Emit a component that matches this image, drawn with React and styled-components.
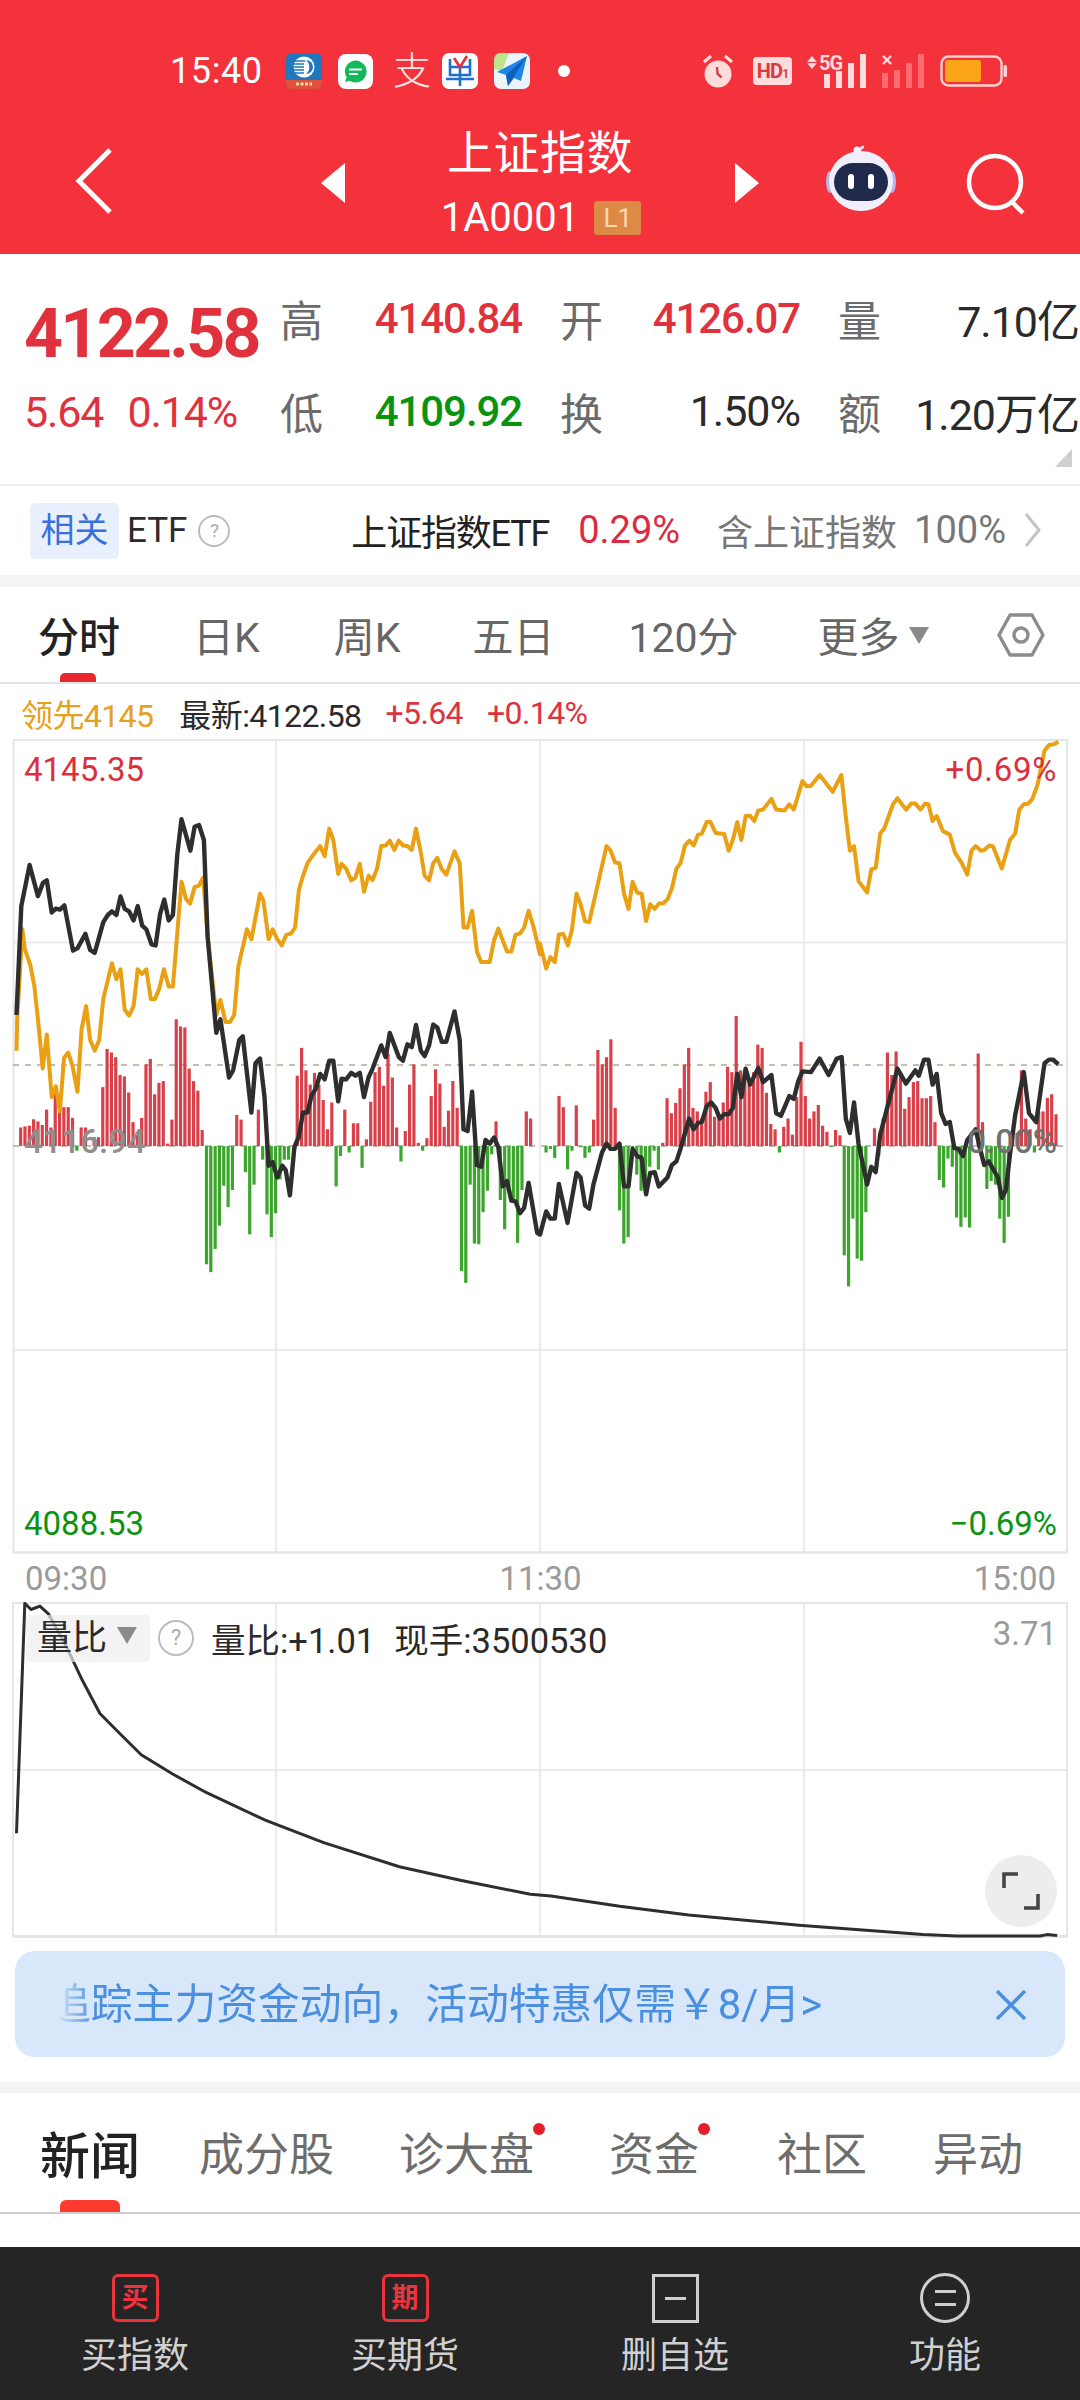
import React from "react";
import styled, { createGlobalStyle } from "styled-components";

const FONT = `Roboto, "Noto Sans CJK SC", "Noto Sans", sans-serif`;
const RED = "#E0323C";
const GREEN = "#0A930F";

const Global = createGlobalStyle`
  html, body { margin: 0; padding: 0; background: #fff; }
  body { font-family: ${FONT}; }
  * { box-sizing: border-box; }
`;

const Page = styled.div`
  width: 1080px; height: 2400px; overflow: hidden; background: #fff;
  display: flex; flex-direction: column; font-family: ${FONT};
`;

/* ---------- header ---------- */
const Header = styled.header`
  height: 254px; background: #F3323B; color: #fff; padding-top: 51px;
  display: flex; flex-direction: column;
`;
const StatusBar = styled.div`
  height: 40px; display: flex; align-items: center; padding-left: 170px;
`;
const Clock = styled.span`font-size: 36px; line-height: 40px; width: 116px; letter-spacing: .6px;`;
const StatusLeft = styled.div`display: flex; align-items: center; gap: 16px;`;
const AlipayGlyph = styled.span`
  font-size: 38px; line-height: 36px; width: 35px; text-align: center; color: #ffe9e9; font-weight: 300; margin: 0 -2px 0 4px;
`;
const Dot = styled.i`width: 12px; height: 12px; border-radius: 50%; background: #fff; margin-left: 12px;`;
const StatusRight = styled.div`display: flex; align-items: center; gap: 14px; margin-left: 132px;`;
const NavRow = styled.div`
  position: relative; flex: 1; display: flex; align-items: flex-start; justify-content: center; padding-top: 31px;
`;
const NavSide = styled.button`
  position: absolute; background: none; border: 0; padding: 0; display: block;
  left: ${p => p.$x}px; top: ${p => p.$y}px;
`;
const TitleBlock = styled.div`display: flex; align-items: center; gap: 0; `;
const TitleText = styled.div`
  width: 414px; text-align: center; display: flex; flex-direction: column; align-items: center;
`;
const Title = styled.div`font-size: 46px; line-height: 62px; letter-spacing: .5px;`;
const Sub = styled.div`display: flex; align-items: center; gap: 15px; margin-top: 12px; padding-left: 2px;`;
const Code = styled.span`font-size: 40px; line-height: 44px;`;
const LevelBadge = styled.span`
  width: 47px; height: 34px; background: #DE8A47; color: #FBD9B2; font-size: 26px; line-height: 34px;
  text-align: center; border-radius: 3px;
`;

/* ---------- quote ---------- */
const Quote = styled.section`
  position: relative; height: 232px; display: flex; border-bottom: 2px solid #ECECEC; padding-top: 34px;
`;
const QuoteLeft = styled.div`width: 280px; padding-left: 24px;`;
const Price = styled.div`
  color: ${RED}; font-size: 68px; line-height: 70px; font-weight: 700; letter-spacing: -2.7px; margin-top: 11px; white-space: nowrap;
`;
const Change = styled.div`
  display: flex; gap: 24px; color: ${RED}; font-size: 43px; line-height: 50px; margin-top: 18px; letter-spacing: -1.1px;
`;
const StatGrid = styled.div`
  display: grid; grid-template-columns: 242px 240px 241px; column-gap: 38px; row-gap: 33px; grid-auto-rows: 60px;
`;
const Stat = styled.div`display: flex; justify-content: space-between; align-items: center;`;
const StatLabel = styled.span`font-size: 43px; color: #6b6b6b;`;
const StatValue = styled.span`
  font-size: ${p => (p.$c ? 42 : 43)}px; letter-spacing: ${p => (p.$c ? -1.1 : -1)}px; white-space: nowrap;
  font-weight: ${p => (p.$c ? 500 : 400)}; color: ${p => p.$c || "#2a2a2a"};
`;
const Corner = styled.i`
  position: absolute; right: 8px; bottom: 17px; width: 0; height: 0;
  border-left: 17px solid transparent; border-bottom: 18px solid #CFCFCF;
`;

/* ---------- ETF row ---------- */
const EtfRow = styled.div`
  height: 89px; display: flex; align-items: center; padding-left: 30px; padding-right: 37px; font-size: 35px; color: #2c2c2c;
`;
const Chip = styled.span`
  width: 89px; height: 56px; background: #E8F0FD; color: #3B6FE0; border-radius: 5px;
  text-align: center; line-height: 55px; font-size: 34px;
`;
const EtfWord = styled.span`margin-left: 8px; font-size: 35px;`;
const Help = styled.i`
  display: inline-block; border: 2px solid #bcbcbc; border-radius: 50%; color: #aaa; font-style: normal; text-align: center;
  width: ${p => p.$s}px; height: ${p => p.$s}px; line-height: ${p => p.$s - 4}px; font-size: ${p => p.$s * 0.6}px;
  margin-left: ${p => p.$ml}px;
`;
const EtfRight = styled.div`margin-left: auto; display: flex; align-items: center; margin-top: -2px;`;
const EtfName = styled.span`font-size: 36px; letter-spacing: -1.2px; color: #222;`;
const EtfPct = styled.span`font-size: 38px; color: #D92B42; margin-left: 29px;`;
const EtfDesc = styled.span`font-size: 36px; color: #777; margin-left: 37px;`;
const EtfHold = styled.span`font-size: 38px; color: #777; margin-left: 17px; margin-right: 17px;`;

const Gap = styled.div`height: ${p => p.$h}px; background: #F4F4F4;`;

/* ---------- period tabs ---------- */
const Tabs = styled.nav`
  position: relative; height: 97px; border-bottom: 2px solid #E4E4E4; display: flex; align-items: center; padding: 7px 35px 0 38px;
`;
const TabList = styled.div`display: flex; align-items: center;`;
const Tab = styled.span`
  font-size: 41px; line-height: 50px; color: ${p => (p.$on ? "#222" : "#666")}; display: flex; align-items: center; gap: 9px;
  font-weight: ${p => (p.$on ? 500 : 400)}; margin-left: ${p => p.$ml || 0}px; white-space: nowrap;
`;
const Caret = styled.i`
  width: 0; height: 0; border-left: 10px solid transparent; border-right: 10px solid transparent;
  border-top: 17px solid #8a8a8a; margin-top: -6px;
`;
const HexBox = styled.div`margin-left: auto; display: flex; margin-top: -7px;`;
const Indicator = styled.i`
  position: absolute; left: 60px; bottom: 0; width: 36px; height: 9px; background: #E8262E; border-radius: 5px 5px 0 0;
`;

/* ---------- info ---------- */
const Info = styled.div`
  height: 55px; display: flex; align-items: center; padding: 2px 0 0 21px; font-size: 32px; letter-spacing: -.6px;
`;
const InfoItem = styled.span`color: ${p => p.$c}; margin-left: ${p => p.$ml || 0}px; white-space: nowrap;`;

/* ---------- charts ---------- */
const ChartWrap = styled.div`position: relative; height: ${p => p.$h}px; flex: none;`;
const ChartSvg = styled.svg`display: block; width: 1080px;`;
const AxisLabel = styled.span`
  position: absolute; font-size: 33px; line-height: 40px; top: ${p => p.$top}px;
  ${p => (p.$right ? `right: ${p.$right}px;` : `left: 24px;`)}
  color: ${p => p.$c}; letter-spacing: ${p => p.$ls || 0}px; font-weight: ${p => p.$w || 400};
`;
const TimeRow = styled.div`
  height: 48px; display: flex; justify-content: space-between; align-items: center; padding: 0 24px 0 25px;
  font-size: 33px; color: #9a9a9a; flex: none;
`;
const VolOverlay = styled.div`
  position: absolute; left: 26px; top: 11px; display: flex; align-items: center; color: #2a2a2a; font-size: 34.5px;
`;
const VolChip = styled.span`
  width: 124px; height: 47px; background: rgba(238,238,238,.7); border-radius: 4px; display: flex; align-items: center;
  padding-left: 11px; gap: 10px; line-height: 47px; font-size: 35px;
`;
const VolText = styled.span`margin-left: ${p => p.$ml}px; white-space: nowrap;`;
const VolMax = styled.span`
  position: absolute; right: 23px; top: 12px; color: #9a9a9a; font-size: 33px; line-height: 40px;
`;
const ExpandBtn = styled.div`
  position: absolute; left: 985px; top: 253px; width: 72px; height: 72px; border-radius: 50%; background: #EDEDED;
  display: flex; align-items: center; justify-content: center;
`;

/* ---------- banner ---------- */
const Banner = styled.div`
  height: 106px; margin: 13px 15px 25px; background: #D8E7FA; border-radius: 20px; flex: none;
  display: flex; align-items: center; padding: 2px 38px 0 45px;
`;
const Marquee = styled.div`
  width: 800px; overflow: hidden; white-space: nowrap;
  -webkit-mask-image: linear-gradient(90deg, rgba(0,0,0,.08) 0, #000 34px);
  mask-image: linear-gradient(90deg, rgba(0,0,0,.08) 0, #000 34px);
`;
const MarqueeText = styled.span`
  display: inline-block; margin-left: -11px; font-size: 41.8px; color: #4A8FE0; line-height: 60px;
`;
const BannerClose = styled.div`margin-left: auto; display: flex;`;

/* ---------- bottom tabs ---------- */
const NewsTabs = styled.nav`
  position: relative; height: 121px; border-bottom: 2px solid #CFCFCF; display: flex; align-items: center; flex: none; padding: 8px 0 10px 40px;
`;
const NewsTab = styled.span`
  position: relative; margin-left: ${p => p.$ml || 0}px; white-space: nowrap;
  font-size: ${p => (p.$on ? 50 : 45)}px; color: ${p => (p.$on ? "#222" : "#6d6d6d")}; font-weight: ${p => (p.$on ? 500 : 400)};
`;
const RedDot = styled.i`
  position: absolute; right: -11px; top: 4px; width: 12px; height: 12px; border-radius: 50%; background: #E3202A;
`;
const NewsIndicator = styled.i`
  position: absolute; left: 60px; bottom: 0; width: 60px; height: 12px; background: #FF3B30; border-radius: 6px 6px 0 0;
`;
const Spacer = styled.div`flex: 1;`;
const BottomBar = styled.footer`
  height: 153px; background: #252525; display: grid; grid-template-columns: repeat(4, 270px); flex: none;
`;
const BarItem = styled.div`
  display: flex; flex-direction: column; align-items: center; padding-top: 26px; color: #D0D0D0; font-size: 36px; line-height: 48px;
`;
const BarIcon = styled.div`height: 50px; display: flex; align-items: center; justify-content: center; margin-bottom: 9px;`;
const RedSquare = styled.span`
  width: 47px; height: 48px; border: 3px solid #E8333C; border-radius: 6px; color: #F0323C; font-size: 27px; font-weight: 700;
  line-height: 42px; text-align: center;
`;
const ClearSquare = styled.span`
  width: 47px; height: 49px; border: 3px solid #CFCFCF; display: flex; align-items: center; justify-content: center;
`;
const Dash = styled.i`width: 21px; height: 3px; background: #CFCFCF;`;
const Circle = styled.span`
  width: 50px; height: 50px; border: 3px solid #CFCFCF; border-radius: 50%; display: flex; flex-direction: column; gap: 10px;
  align-items: center; justify-content: center;
`;

/* ---------- chart data (traced) ---------- */
const gL = [[48,870],[50,780],[65,530],[72,585],[88,630],[100,690],[112,800],[124,920],[136,825],[150,1000],[162,970],[174,1040],[186,890],[198,875],[210,910],[225,985],[237,810],[250,745],[262,840],[275,870],[288,840],[300,725],[325,625],[338,670],[350,642],[362,755],[375,772],[388,745],[400,642],[412,655],[425,642],[438,725],[450,725],[463,695],[476,642],[490,690],[502,690],[515,540],[527,397],[540,445],[552,458],[565,412],[578,408],[590,385],[603,550],[628,770],[640,728],[655,790],[668,790],[680,770],[692,635],[705,580],[717,530],[730,558],[755,430],[765,450],[780,558],[792,530],[805,558],[818,575],[832,545],[845,542],[857,525],[868,420],[880,380],[893,345],[905,328],[930,297],[943,325],[956,248],[968,280],[982,375],[992,347],[1005,360],[1020,393],[1032,385],[1045,347],[1057,425],[1070,380],[1082,392],[1095,360],[1107,297],[1120,295],[1132,282],[1145,308],[1158,282],[1170,295],[1183,297],[1196,308],[1208,248],[1222,315],[1233,380],[1246,393],[1258,345],[1270,330],[1283,362],[1296,377],[1320,312],[1335,345],[1346,525],[1358,525],[1371,478],[1385,592],[1397,622],[1422,622],[1435,560],[1447,528],[1472,592],[1485,592],[1497,545],[1510,542],[1522,525],[1535,478],[1550,525],[1568,600]];
const gR = [[0,570],[18,640],[30,608],[43,622],[55,545],[68,543],[81,575],[93,530],[106,430],[118,460],[131,508],[143,510],[193,297],[205,310],[218,343],[231,345],[244,430],[257,473],[269,397],[282,427],[295,430],[308,507],[320,460],[333,473],[345,458],[358,457],[371,445],[383,415],[396,360],[408,345],[421,295],[434,282],[446,295],[459,265],[470,262],[484,230],[495,230],[510,260],[535,263],[548,310],[560,280],[573,230],[585,280],[597,213],[610,212],[622,227],[634,197],[648,195],[672,165],[686,195],[710,197],[724,180],[737,195],[762,115],[775,130],[787,128],[812,98],[850,145],[875,98],[888,215],[900,310],[912,297],[925,395],[950,427],[962,362],[975,358],[988,262],[1000,247],[1025,180],[1038,163],[1063,195],[1078,178],[1090,178],[1105,195],[1118,178],[1128,180],[1140,227],[1152,213],[1170,255],[1190,265],[1205,315],[1225,345],[1241,377],[1253,310],[1265,297],[1280,310],[1290,308],[1305,295],[1315,297],[1341,360],[1365,280],[1380,262],[1392,195],[1405,180],[1418,178],[1430,165],[1445,125],[1465,30],[1478,14],[1492,12],[1505,5]];
const kL = [[48,770],[62,465],[86,350],[110,437],[125,400],[136,393],[150,483],[162,472],[174,475],[187,463],[212,590],[225,583],[248,543],[262,588],[275,596],[300,510],[313,490],[325,480],[338,490],[350,438],[362,473],[375,480],[388,505],[400,465],[413,520],[425,530],[440,572],[452,575],[465,487],[477,447],[490,505],[502,490],[515,320],[527,222],[553,310],[565,243],[578,238],[592,280],[603,550],[628,820],[640,782],[665,945],[677,925],[695,840],[705,830],[730,1043],[742,905],[755,892],[768,1000],[780,1192],[792,1182],[805,1225],[820,1192],[830,1205],[842,1275],[855,1140],[868,1110],[880,1043],[893,1043],[905,995],[918,975],[930,935],[943,950],[956,898],[968,898],[982,1012],[992,948],[1005,950],[1020,932],[1032,940],[1045,932],[1057,1000],[1070,945],[1082,920],[1107,855],[1120,888],[1132,820],[1158,888],[1170,898],[1183,852],[1196,860],[1208,798],[1222,870],[1233,885],[1246,855],[1258,797],[1270,805],[1283,845],[1296,845],[1320,760],[1335,840],[1346,1090],[1358,1095],[1371,985],[1385,1190],[1397,1195],[1410,1120],[1422,1130],[1435,1113],[1447,1140],[1460,1250],[1472,1235],[1485,1290],[1497,1292],[1510,1325],[1522,1310],[1535,1240],[1560,1380],[1568,1385]];
const kR = [[0,1385],[18,1320],[30,1340],[43,1340],[55,1243],[80,1352],[106,1212],[118,1225],[131,1303],[143,1312],[155,1245],[180,1155],[193,1130],[205,1145],[218,1145],[231,1130],[244,1250],[257,1250],[269,1145],[282,1165],[295,1170],[308,1272],[320,1212],[333,1210],[345,1250],[370,1225],[383,1190],[396,1180],[408,1145],[433,1060],[446,1090],[459,1072],[470,1070],[484,1025],[497,1015],[510,1030],[522,1060],[535,1048],[548,1048],[560,1030],[573,935],[585,1000],[597,920],[610,965],[634,918],[648,958],[672,938],[686,1045],[700,1052],[724,997],[737,1005],[750,955],[762,928],[787,930],[812,892],[838,938],[862,892],[876,888],[888,1060],[900,1100],[912,1015],[925,1130],[950,1245],[962,1195],[975,1210],[988,1105],[1000,1060],[1038,920],[1063,962],[1090,925],[1100,940],[1115,895],[1128,895],[1140,965],[1152,935],[1165,1045],[1178,1075],[1190,1070],[1203,1143],[1215,1145],[1228,1165],[1241,1120],[1265,1090],[1278,1145],[1290,1190],[1303,1180],[1330,1225],[1341,1282],[1353,1260],[1365,1160],[1380,1050],[1405,930],[1420,1045],[1441,1070],[1465,905],[1478,895],[1490,895],[1505,908]];
const barsL = [1085,1082,1080,1062,1068,1078,1035,1085,990,1040,1028,1028,1058,1150,1085,1085,1137,1112,1112,972,865,875,888,938,942,987,1070,1098,1058,908,893,992,960,955,1130,1063,782,802,805,920,955,982,1092,1468,1490,1425,1360,1248,1308,1260,1050,1063,1210,1384,1245,1035,1175,1328,1392,1325,1230,1175,1175,1137,940,862,925,965,932,965,1008,1090,1015,1250,1165,1035,1155,1073,1073,1198,1118,1013,930,915,968,878,945,1085,1180,1095,965,908,1128,1150,1115,997,922,962,1083,1038,955,1030,1487,1520,1245,1410,1412,1322,1262,1160,1068,1288,1370,1250,1290,1408,1260,1040,1060];
const barsR = [1137,1155,1145,1170,997,1028,1202,1150,1023,1140,1170,1155,1063,868,908,888,838,1030,1317,1410,1392,1145,1217,1262,1270,1195,1150,1203,1128,1003,1045,1016,975,908,862,1030,1040,1060,985,958,1055,1060,1015,915,930,773,925,940,965,930,853,862,988,1075,1090,1155,1083,1060,1105,1000,845,997,1060,1040,1022,1080,1097,1140,1092,1107,1443,1530,1340,1452,1458,1322,1137,1087,1165,1060,875,938,872,935,1033,1000,958,955,1003,1003,997,1070,1232,1253,1172,1195,1337,1363,1337,1365,1137,878,1070,1257,1235,1245,1340,1408,1335,1100,1100,925,1060,1090,1155,1040,1040,1002,992,1048];
const ratio = [[24,968],[36,300],[45,318],[58,308],[70,330],[95,420],[120,525],[145,620],[175,680],[205,740],[250,795],[300,850],[385,930],[470,995],[580,1065],[670,1105],[770,1145],[800,1150],[900,1180],[1000,1205],[1160,1235],[1340,1262],[1390,1266],[1510,1266],[1520,1262],[1535,1265]];

const SX = 2.904, SY = 2.8;
const my = y => 740 + y / SY;
const pts = (l, r) => [...l.map(([x, y]) => [x / SX, my(y)]), ...r.map(([x, y]) => [540 + x / SX, my(y)])]
  .map(([x, y]) => `${x.toFixed(1)},${y.toFixed(1)}`).join(" ");
const base = my(1137);
const bars = [
  ...barsL.map((t, i) => [(60 + i * 12.55) / SX, t]),
  ...barsR.map((t, i) => [540 + (5 + i * 12.55) / SX, t]),
].filter(b => b[1] !== 1137);
const ratioPts = ratio.map(([x, y]) => `${(x / 1.452).toFixed(1)},${(1500 + y / 2.904).toFixed(1)}`).join(" ");

const GridV = ({ x, y1, y2, w = 1.5 }) => <line x1={x} x2={x} y1={y1} y2={y2} stroke="#E6E6E6" strokeWidth={w} />;
const GridH = ({ y, w = 1.5 }) => <line x1="13" x2="1068" y1={y} y2={y} stroke="#E6E6E6" strokeWidth={w} />;

const PriceChart = () => (
  <ChartSvg height="815" viewBox="0 739 1080 815">
    <GridV x="13.5" y1="740" y2="1553" w={2} />
    <GridV x="276" y1="740" y2="1553" />
    <GridV x="540" y1="740" y2="1553" />
    <GridV x="804" y1="740" y2="1553" />
    <GridV x="1067" y1="740" y2="1553" w={2} />
    <GridH y="740" w={2} />
    <GridH y="942.5" />
    <GridH y="1350" />
    <GridH y="1552.5" w={2.5} />
    <line x1="13" x2="1068" y1="1065" y2="1065" stroke="#B9A78C" strokeWidth="1.6" strokeDasharray="6 6" />
    <line x1="13" x2="1068" y1={base} y2={base} stroke="#A8A8A8" strokeWidth="1.6" strokeDasharray="6 6" />
    {bars.map(([x, t], i) => {
      const y = my(t);
      return t < 1137
        ? <rect key={i} x={x - 1.6} y={y} width="3.2" height={base - y} fill="#D8404A" />
        : <rect key={i} x={x - 1.6} y={base} width="3.2" height={y - base} fill="#3CA52C" />;
    })}
    <polyline points={pts(gL, gR)} fill="none" stroke="#E9A013" strokeWidth="4" strokeLinejoin="round" />
    <polyline points={pts(kL, kR)} fill="none" stroke="#2E2E2E" strokeWidth="4.4" strokeLinejoin="round" />
  </ChartSvg>
);

const RatioChart = () => (
  <ChartSvg height="336" viewBox="0 1602 1080 336">
    <GridV x="13" y1="1602" y2="1937" w={2} />
    <GridV x="276" y1="1602" y2="1937" />
    <GridV x="540" y1="1602" y2="1937" />
    <GridV x="804" y1="1602" y2="1937" />
    <GridV x="1067" y1="1602" y2="1937" w={2} />
    <GridH y="1603" w={2} />
    <GridH y="1770" />
    <GridH y="1936.5" w={3} />
    <polyline points={ratioPts} fill="none" stroke="#2E2E2E" strokeWidth="3" strokeLinejoin="round" />
  </ChartSvg>
);

/* ---------- icons ---------- */
const AppBlue = () => (
  <svg width="36" height="36" viewBox="0 0 36 36">
    <rect width="36" height="36" rx="6" fill="#1F78BE" />
    <circle cx="18" cy="14" r="10.5" fill="#fff" />
    <path d="M20 7a7 7 0 0 1 0 14 9 9 0 0 0 0-14z" fill="#1F78BE" />
    <path d="M8 8h11M7 11h11M7 14h11M7 17h11M9 20h9" stroke="#1F78BE" strokeWidth="1.3" />
    <path d="M0 27h36v3a6 6 0 0 1-6 6H6a6 6 0 0 1-6-6z" fill="#E2503A" />
    <path d="M10 31h16" stroke="#F8D9A8" strokeWidth="3" strokeDasharray="3 1.5" />
  </svg>
);
const AppChat = () => (
  <svg width="35" height="35" viewBox="0 0 35 35">
    <rect width="35" height="35" rx="8" fill="#fff" />
    <path d="M17.5 6.5a11 11 0 1 1-5.8 20.3L7 28l1.6-4.7A11 11 0 0 1 17.5 6.5z" fill="#12B85A" />
    <path d="M12 15.5h11M12 20h7" stroke="#fff" strokeWidth="2.2" strokeLinecap="round" />
  </svg>
);
const AppOrder = () => (
  <svg width="36" height="36" viewBox="0 0 36 36">
    <rect width="36" height="36" rx="7" fill="#fff" />
    <path d="M8 6v16h20V6M8 14h20M4 26h28M18 14v19" fill="none" stroke="#1C6FD0" strokeWidth="2.6" />
    <path d="M12 5l6 9 7-11" fill="none" stroke="#E5303A" strokeWidth="2.6" />
  </svg>
);
const AppPlane = () => (
  <svg width="36" height="36" viewBox="0 0 36 36">
    <rect width="36" height="36" rx="7" fill="#EAF4FB" />
    <path d="M0 7a7 7 0 0 1 7-7h8L8 18 0 16z" fill="#BFE38A" />
    <path d="M33 3L3 19l9 3 2 11 6-8 7 3z" fill="#1E86E8" />
    <path d="M33 3L12 22l2 11z" fill="#0F5FB8" />
  </svg>
);
const Alarm = () => (
  <svg width="32" height="34" viewBox="0 0 32 34">
    <circle cx="16" cy="20" r="13.5" fill="#FFDCDC" />
    <path d="M2 8l7-6M30 8l-7-6" stroke="#FFDCDC" strokeWidth="3" />
    <path d="M15 13l0.6 7 4 3.5" fill="none" stroke="#C9444B" strokeWidth="2.4" />
  </svg>
);
const HdBadge = styled.span`
  width: 39px; height: 28px; background: #FFDCDC; border-radius: 4px; color: #D83B42; font-size: 20px; font-weight: 700;
  line-height: 28px; text-align: center; letter-spacing: -.8px; margin-left: 5px;
`;
const HdSub = styled.span`font-size: 12px;`;
const Signal5G = () => (
  <svg width="62" height="34" viewBox="0 0 62 34" overflow="visible">
    <path d="M6 2l5 6H1zM6 15l5-6H1z" fill="#FFDCDC" />
    <text x="13" y="16" fontFamily="Roboto" fontWeight="700" fontSize="20" fill="#FFDCDC" letterSpacing="-1">5G</text>
    <g fill="#FFDCDC">
      <rect x="18" y="20" width="6" height="14" /><rect x="30" y="17" width="6" height="17" /><rect x="42" y="9" width="6" height="25" /><rect x="54" y="0" width="6" height="34" />
    </g>
  </svg>
);
const SignalX = () => (
  <svg width="44" height="34" viewBox="0 0 44 34">
    <path d="M1 2l8 8M9 2l-8 8" stroke="#FFDCDC" strokeWidth="2.4" />
    <g fill="#FF6B70">
      <rect x="0" y="19" width="6" height="15" /><rect x="12" y="16" width="6" height="18" /><rect x="24" y="9" width="6" height="25" /><rect x="36" y="0" width="6" height="34" />
    </g>
  </svg>
);
const Battery = () => (
  <svg width="67" height="32" viewBox="0 0 67 32">
    <rect x="1.5" y="1.5" width="60" height="29" rx="7" fill="none" stroke="#FFD2D2" strokeWidth="2.4" />
    <rect x="5" y="5" width="36" height="22" rx="3" fill="#FBA516" />
    <rect x="63.5" y="10" width="3.5" height="12" rx="1.5" fill="#FFD2D2" />
  </svg>
);
const Back = () => (
  <svg width="38" height="68" viewBox="0 0 38 68" fill="none">
    <path d="M35 3L4 34l31 31" stroke="#fff" strokeWidth="5" />
  </svg>
);
const Tri = ({ right }) => (
  <svg width="24" height="40" viewBox="0 0 24 40">
    <path d={right ? "M0 0l24 20L0 40z" : "M24 0L0 20l24 20z"} fill="#fff" />
  </svg>
);
const Robot = () => (
  <svg width="72" height="70" viewBox="0 0 72 70">
    <path d="M35 12c-1-5 0-9 4-9" fill="none" stroke="#E8E4F6" strokeWidth="2.5" />
    <circle cx="32" cy="6" r="3.5" fill="#F2F0FB" />
    <ellipse cx="5" cy="38" rx="4" ry="11" fill="#B9B4E8" />
    <ellipse cx="67" cy="38" rx="4" ry="11" fill="#B9B4E8" />
    <ellipse cx="36" cy="37" rx="32" ry="30" fill="#F1EFFB" />
    <rect x="9" y="19" width="54" height="38" rx="19" fill="#1F2A4C" />
    <rect x="23" y="30" width="6" height="15" rx="3" fill="#fff" />
    <rect x="43" y="30" width="6" height="15" rx="3" fill="#fff" />
  </svg>
);
const Search = () => (
  <svg width="64" height="64" viewBox="0 0 64 64" fill="none">
    <circle cx="30" cy="29" r="26" stroke="#fff" strokeWidth="4.5" />
    <path d="M47 49l11 11" stroke="#fff" strokeWidth="4.5" />
  </svg>
);
const Hex = () => (
  <svg width="48" height="46" viewBox="0 0 48 46" fill="none" stroke="#8C8C8C" strokeWidth="3.4" strokeLinejoin="round">
    <path d="M2 23L13 3h22l11 20-11 20H13z" />
    <circle cx="24" cy="23" r="7" />
  </svg>
);
const Chevron = () => (
  <svg width="20" height="36" viewBox="0 0 20 36" fill="none">
    <path d="M3 2l13 16L3 34" stroke="#C4C4C4" strokeWidth="3" />
  </svg>
);
const Expand = () => (
  <svg width="38" height="38" viewBox="0 0 38 38" fill="none" stroke="#444" strokeWidth="3.6">
    <path d="M2 16V2h14M36 22v14H22" />
  </svg>
);
const Close = () => (
  <svg width="32" height="32" viewBox="0 0 32 32" fill="none">
    <path d="M2 2l28 28M30 2L2 30" stroke="#4A8FE0" strokeWidth="3.4" />
  </svg>
);

const periods = [
  { t: "日K", ml: 73 },
  { t: "周K", ml: 74 },
  { t: "五日", ml: 72 },
  { t: "120分", ml: 74 },
];
const news = [
  { t: "成分股", ml: 59 },
  { t: "诊大盘", ml: 65, dot: true },
  { t: "资金", ml: 75, dot: true },
  { t: "社区", ml: 78 },
  { t: "异动", ml: 66 },
];

export default function App() {
  return (
    <Page>
      <Global />
      <Header>
        <StatusBar>
          <Clock>15:40</Clock>
          <StatusLeft>
            <AppBlue /><AppChat /><AlipayGlyph>支</AlipayGlyph><AppOrder /><AppPlane /><Dot />
          </StatusLeft>
          <StatusRight>
            <Alarm /><HdBadge>HD<HdSub>1</HdSub></HdBadge><Signal5G /><SignalX /><Battery />
          </StatusRight>
        </StatusBar>
        <NavRow>
          <NavSide $x={75} $y={56}><Back /></NavSide>
          <NavSide $x={321} $y={72}><Tri /></NavSide>
          <TitleBlock>
            <TitleText>
              <Title>上证指数</Title>
              <Sub><Code>1A0001</Code><LevelBadge>L1</LevelBadge></Sub>
            </TitleText>
          </TitleBlock>
          <NavSide $x={735} $y={72}><Tri right /></NavSide>
          <NavSide $x={825} $y={53}><Robot /></NavSide>
          <NavSide $x={965} $y={62}><Search /></NavSide>
        </NavRow>
      </Header>

      <Quote>
        <QuoteLeft>
          <Price>4122.58</Price>
          <Change><span>5.64</span><span>0.14%</span></Change>
        </QuoteLeft>
        <StatGrid>
          <Stat><StatLabel>高</StatLabel><StatValue $c={RED}>4140.84</StatValue></Stat>
          <Stat><StatLabel>开</StatLabel><StatValue $c={RED}>4126.07</StatValue></Stat>
          <Stat><StatLabel>量</StatLabel><StatValue>7.10亿</StatValue></Stat>
          <Stat><StatLabel>低</StatLabel><StatValue $c={GREEN}>4109.92</StatValue></Stat>
          <Stat><StatLabel>换</StatLabel><StatValue>1.50%</StatValue></Stat>
          <Stat><StatLabel>额</StatLabel><StatValue>1.20万亿</StatValue></Stat>
        </StatGrid>
        <Corner />
      </Quote>

      <EtfRow>
        <Chip>相关</Chip>
        <EtfWord>ETF</EtfWord>
        <Help $s={32} $ml={11}>?</Help>
        <EtfRight>
          <EtfName>上证指数ETF</EtfName>
          <EtfPct>0.29%</EtfPct>
          <EtfDesc>含上证指数</EtfDesc>
          <EtfHold>100%</EtfHold>
          <Chevron />
        </EtfRight>
      </EtfRow>
      <Gap $h={12} />

      <Tabs>
        <TabList>
          <Tab $on>分时</Tab>
          {periods.map(p => <Tab key={p.t} $ml={p.ml}>{p.t}</Tab>)}
          <Tab $ml={79}>更多<Caret /></Tab>
        </TabList>
        <HexBox><Hex /></HexBox>
        <Indicator />
      </Tabs>

      <Info>
        <InfoItem $c="#E6A11C">领先4145</InfoItem>
        <InfoItem $c="#2A2A2A" $ml={26}>最新:4122.58</InfoItem>
        <InfoItem $c={RED} $ml={24}>+5.64</InfoItem>
        <InfoItem $c={RED} $ml={24}>+0.14%</InfoItem>
      </Info>

      <ChartWrap $h={815}>
        <PriceChart />
        <AxisLabel $top={11} $c="#DB2F3E">4145.35</AxisLabel>
        <AxisLabel $top={11} $right={23} $c="#DB2F3E" $ls={0.7}>+0.69%</AxisLabel>
        <AxisLabel $top={383} $c="#8f8f8f" $w={500}>4116.94</AxisLabel>
        <AxisLabel $top={383} $right={23} $c="#707070" $w={500}>0.00%</AxisLabel>
        <AxisLabel $top={765} $c={GREEN}>4088.53</AxisLabel>
        <AxisLabel $top={765} $right={23} $c={GREEN}>−0.69%</AxisLabel>
      </ChartWrap>

      <TimeRow><span>09:30</span><span>11:30</span><span>15:00</span></TimeRow>

      <ChartWrap $h={336}>
        <RatioChart />
        <VolOverlay>
          <VolChip>量比<Caret /></VolChip>
          <Help $s={36} $ml={8}>?</Help>
          <VolText $ml={17}>量比:+1.01</VolText>
          <VolText $ml={19}>现手:3500530</VolText>
        </VolOverlay>
        <VolMax>3.71</VolMax>
        <ExpandBtn><Expand /></ExpandBtn>
      </ChartWrap>

      <Banner>
        <Marquee><MarqueeText>追踪主力资金动向，活动特惠仅需￥8/月&gt;</MarqueeText></Marquee>
        <BannerClose><Close /></BannerClose>
      </Banner>
      <Gap $h={11} />

      <NewsTabs>
        <NewsTab $on>新闻</NewsTab>
        {news.map(n => (
          <NewsTab key={n.t} $ml={n.ml}>{n.t}{n.dot && <RedDot />}</NewsTab>
        ))}
        <NewsIndicator />
      </NewsTabs>
      <Spacer />
      <BottomBar>
        <BarItem><BarIcon><RedSquare>买</RedSquare></BarIcon>买指数</BarItem>
        <BarItem><BarIcon><RedSquare>期</RedSquare></BarIcon>买期货</BarItem>
        <BarItem><BarIcon><ClearSquare><Dash /></ClearSquare></BarIcon>删自选</BarItem>
        <BarItem><BarIcon><Circle><Dash /><Dash /></Circle></BarIcon>功能</BarItem>
      </BottomBar>
    </Page>
  );
}
